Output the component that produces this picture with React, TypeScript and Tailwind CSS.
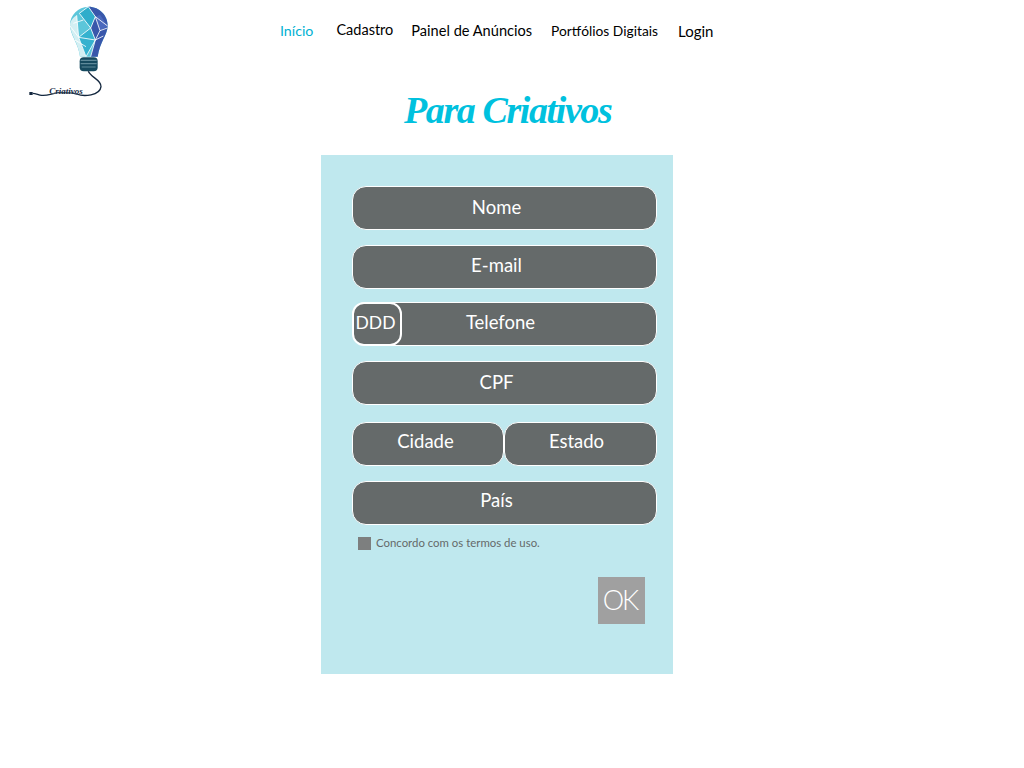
const sans = "font-['Lato','Noto_Sans',sans-serif]";

const navLinks = [
  { label: "Início", className: "ml-[280px] text-[14.2px] text-[#00b1d2]" },
  { label: "Cadastro", className: "ml-[23px] -translate-y-px text-[14.5px] text-black" },
  { label: "Painel de Anúncios", className: "ml-[18px] text-[14.6px] text-black" },
  { label: "Portfólios Digitais", className: "ml-[19px] text-[13.8px] text-black" },
  { label: "Login", className: "ml-[20px] text-[15px] text-black" },
];

const Logo = () => (
  <svg viewBox="0 0 300 315" className="absolute left-[20px] top-0 h-[105px] w-[100px]">
    <path d="M205 20 C240 20 264 48 263 78 C262 105 240 125 233 170 L180 170 C176 130 150 105 150 75 C150 45 175 20 205 20Z" fill="#5cc6da" />
    <path d="M205 20 C240 20 264 48 263 78 C262 105 240 125 233 170 L212 170 L226 120 L212 84 L226 50Z" fill="#3957ab" />
    <path d="M150 75 C150 100 176 130 180 170 L198 170 L176 112 L170 46 C158 54 150 64 150 75Z" fill="#d3eff3" />
    <path d="M205 20 L226 50 L212 84 L178 40Z" fill="#2fadcb" />
    <path d="M176 112 L212 84 L226 120 L198 170Z" fill="#35b2cf" />
    <path d="M240 44 L263 78 L240 92 L226 50Z" fill="#4a69bd" />
    <path d="M178 40 L212 84 M212 84 L226 120 L212 170 M226 50 L263 78 M226 120 L250 108 M176 112 L212 84 M176 112 L226 120 M170 46 L176 112 L198 170 M205 20 L178 40 M205 20 L226 50 L212 84 M226 50 L240 92 L226 120 M176 112 L150 78 M190 60 L160 70 M240 92 L262 84 M198 170 L226 120 M165 120 L198 140" fill="none" stroke="#ffffff" strokeWidth="2.5" />
    <rect x="179" y="172" width="54" height="42" rx="12" fill="#164a5f" />
    <path d="M182 181 H230 M182 191 H230 M185 201 H227" stroke="#5f8a9a" strokeWidth="3.5" />
    <path d="M205 214 C212 232 245 240 243 260 C240 288 190 290 170 282 C155 278 140 278 120 278 C100 278 85 288 65 286 C55 285 48 280 38 280" fill="none" stroke="#14283f" strokeWidth="4" />
    <path d="M28 276 H38 V285 H28Z" fill="#14283f" />
    <text x="88" y="282" fontFamily="'Liberation Serif', serif" fontStyle="italic" fontWeight="700" fontSize="27" fill="#14283f" stroke="#ffffff" strokeWidth="0.6" paintOrder="stroke">Criativos</text>
  </svg>
);

const Field = ({ label, className = "" }: { label: string; className?: string }) => (
  <div className={`flex h-[44px] items-center justify-center rounded-[14px] border border-white bg-[#656a6a] text-[18.5px] text-white ${className}`}>
    {label}
  </div>
);

export default function App() {
  return (
    <div className={`relative min-h-[768px] bg-white pb-[94px] ${sans}`}>
      <Logo />
      <nav className="flex h-[62px] items-center">
        {navLinks.map((link) => (
          <a key={link.label} href="#" className={link.className}>
            {link.label}
          </a>
        ))}
      </nav>
      <h1 className="ml-[404px] h-[93px] pt-[23px] font-['Liberation_Serif',cursive] text-[38px] leading-[50px] font-bold tracking-[-1.4px] text-[#00c1de] italic">
        Para Criativos
      </h1>
      <form className="ml-[321px] h-[519px] w-[352px] bg-[#bfe8ee] pt-[32px] pr-[16px] pl-[31px]">
        <Field label="Nome" className="-mt-px pr-[16px] pb-[1px]" />
        <Field label="E-mail" className="mt-[15px] pr-[16px] pb-[3px]" />
        <div className="relative mt-[13px]">
          <Field label="Telefone" className="pr-[8px] pb-[3px]" />
          <div className="absolute top-0 left-0 flex h-[44px] w-[50px] items-center justify-center rounded-[12px] border-2 border-white bg-[#656a6a] pr-[3px] pb-[1px] text-[17.5px] text-white">
            DDD
          </div>
        </div>
        <Field label="CPF" className="mt-[15px] pr-[16px]" />
        <div className="mt-[17px] flex">
          <Field label="Cidade" className="w-[152px] pr-[5px] pb-[5px]" />
          <Field label="Estado" className="flex-1 pr-[8px] pb-[5px]" />
        </div>
        <Field label="País" className="mt-[15px] pr-[16px] pb-[5px]" />
        <label className="mt-[9px] ml-[6px] flex items-center gap-[5px] text-[11.4px] text-[#656a6a]">
          <span className="h-[13px] w-[13px] bg-[#7d7f7f]" />
          <span className="pb-[2px]">Concordo com os termos de uso.</span>
        </label>
        <div className="mt-[24px] flex justify-end pr-[12px]">
          <button type="button" className="h-[47px] w-[47px] bg-[#a0a0a0] pr-[3px] text-[27px] font-light tracking-[-2px] text-white">
            OK
          </button>
        </div>
      </form>
    </div>
  );
}
